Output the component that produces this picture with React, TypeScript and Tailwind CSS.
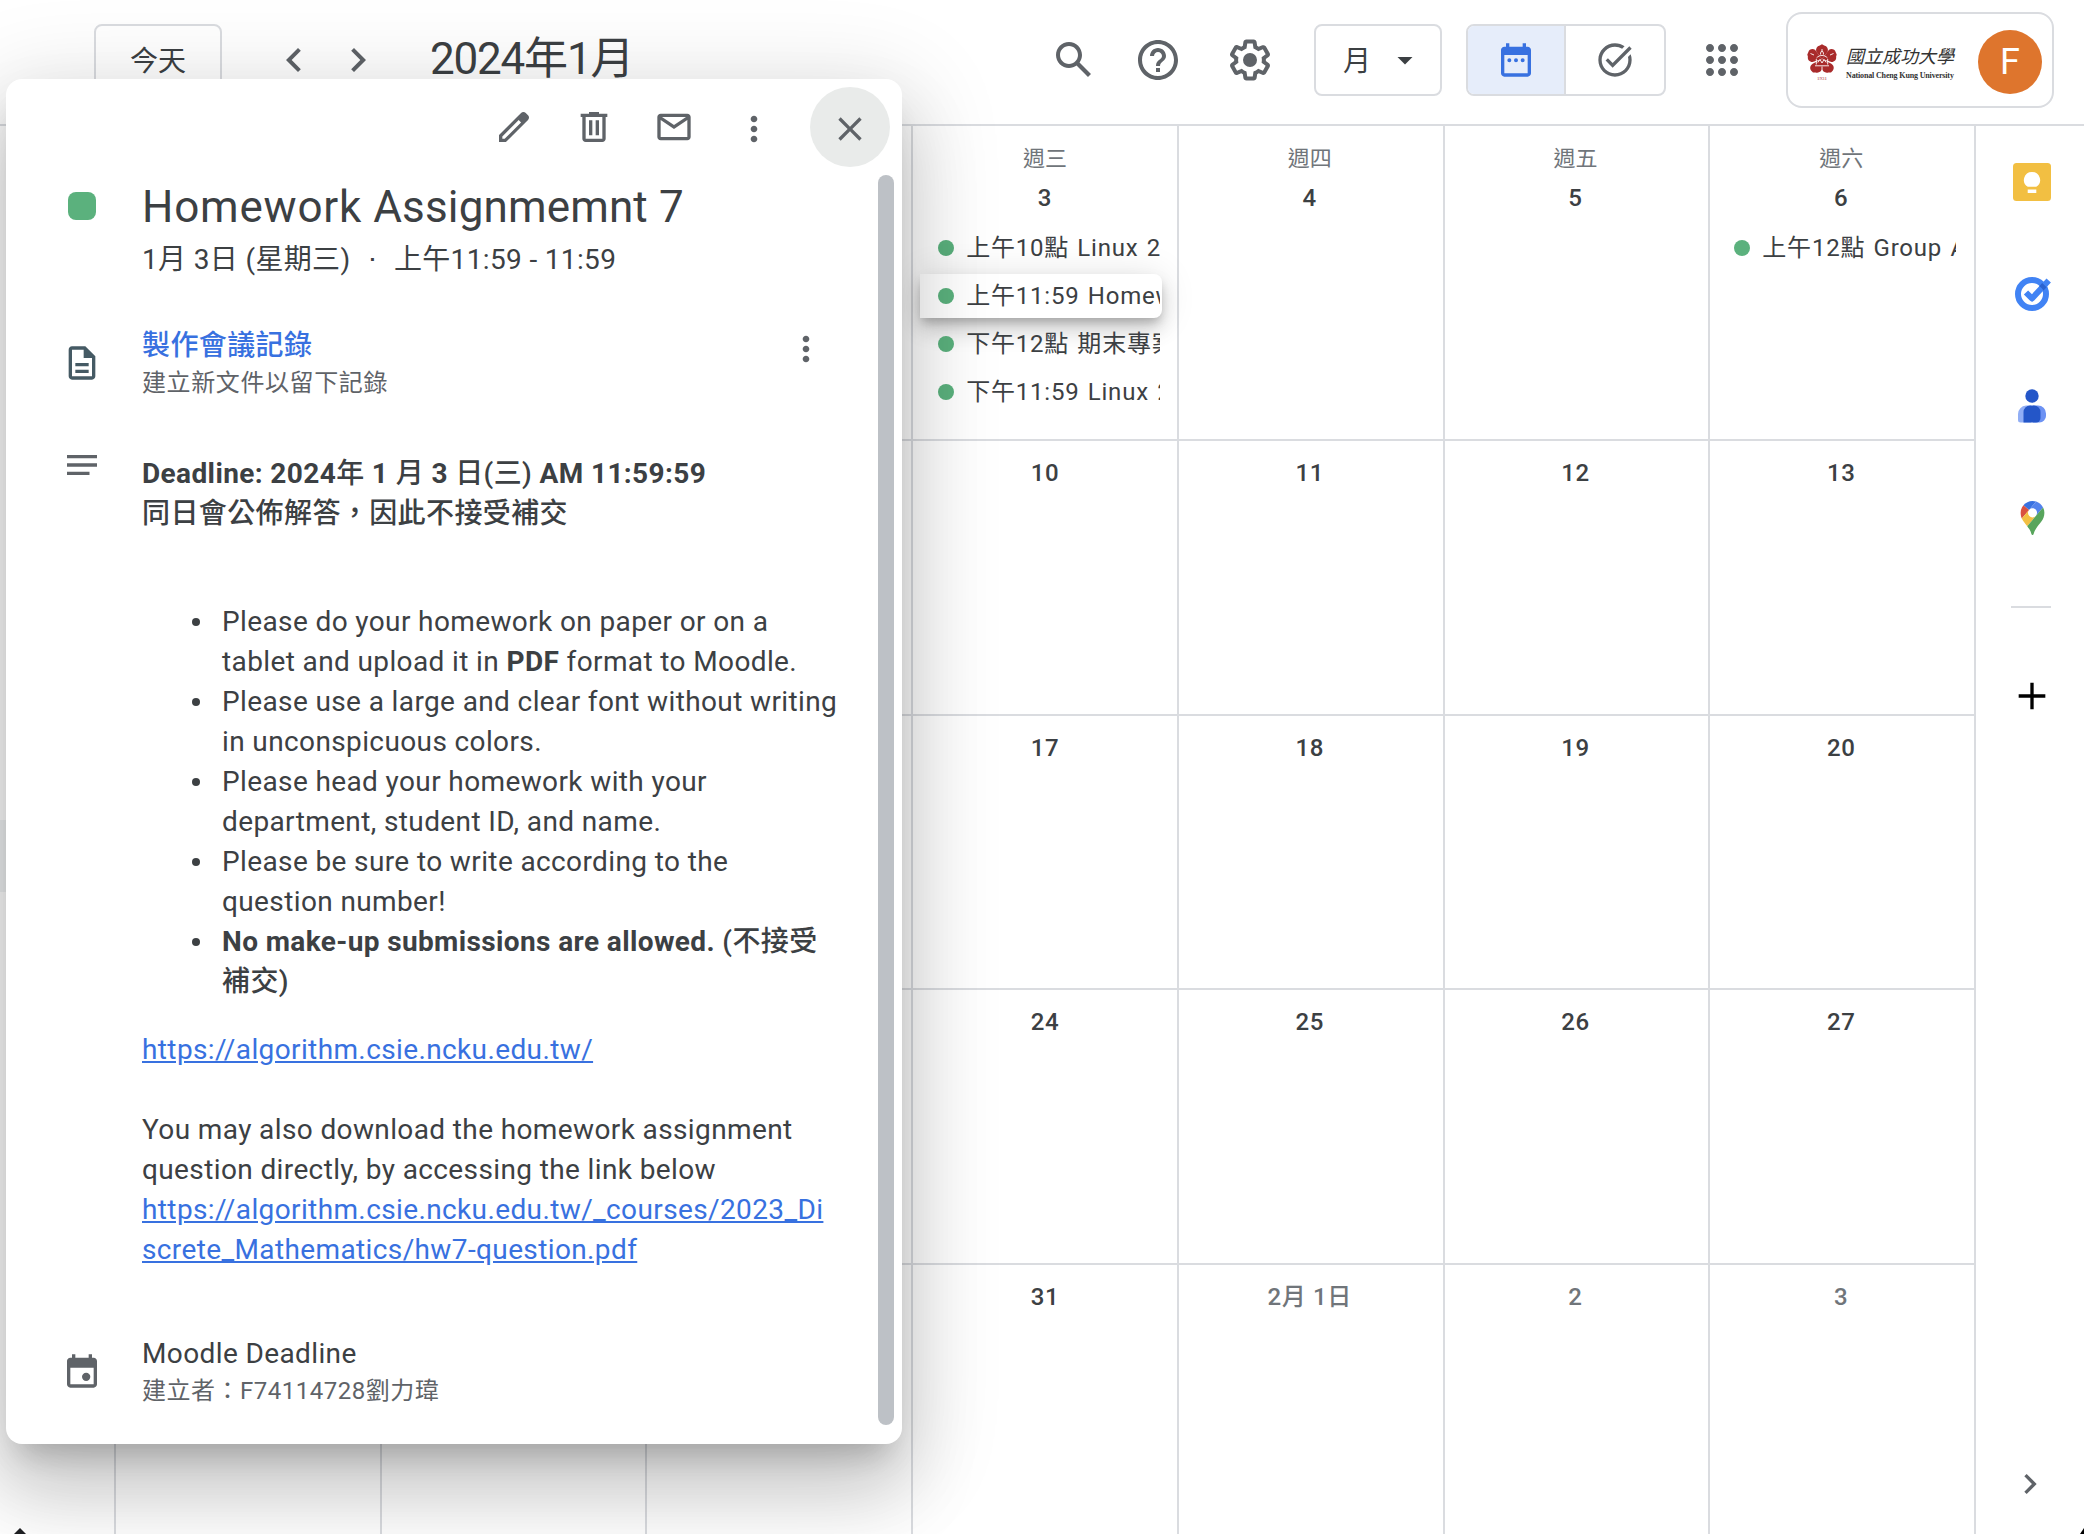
import React from "react";

const P = {
  search:
    "M20.49 19l-5.73-5.73C15.53 12.2 16 10.91 16 9.5 16 5.91 13.09 3 9.5 3S3 5.91 3 9.5 5.91 16 9.5 16c1.41 0 2.7-.47 3.77-1.24L19 20.49 20.49 19zM5 9.5C5 7.01 7.01 5 9.5 5S14 7.01 14 9.5 11.99 14 9.5 14 5 11.99 5 9.5z",
  help: "M11 18h2v-2h-2v2zm1-16C6.48 2 2 6.48 2 12s4.48 10 10 10 10-4.48 10-10S17.52 2 12 2zm0 18c-4.41 0-8-3.59-8-8s3.59-8 8-8 8 3.59 8 8-3.59 8-8 8zm0-14c-2.21 0-4 1.79-4 4h2c0-1.1.9-2 2-2s2 .9 2 2c0 2-3 1.75-3 5h2c0-2.25 3-2.5 3-5 0-2.21-1.79-4-4-4z",
  gear: "M13.85 22.25h-3.7c-.74 0-1.36-.54-1.45-1.27l-.27-1.89c-.27-.14-.53-.29-.79-.46l-1.8.72c-.7.26-1.47-.03-1.81-.65L2.2 15.53c-.35-.66-.2-1.44.36-1.88l1.53-1.19c-.01-.15-.02-.3-.02-.46 0-.15.01-.31.02-.46l-1.52-1.19c-.59-.45-.74-1.26-.37-1.88l1.85-3.19c.34-.62 1.11-.9 1.79-.63l1.81.73c.26-.17.52-.32.78-.46l.27-1.91c.09-.7.71-1.25 1.44-1.25h3.7c.74 0 1.36.54 1.45 1.27l.27 1.89c.27.14.53.29.79.46l1.8-.72c.71-.26 1.48.03 1.82.65l1.84 3.18c.36.66.2 1.44-.36 1.88l-1.52 1.19c.01.15.02.3.02.46s-.01.31-.02.46l1.52 1.19c.56.45.72 1.23.37 1.86l-1.86 3.22c-.34.62-1.11.9-1.8.63l-1.8-.72c-.26.17-.52.32-.78.46l-.27 1.91c-.1.68-.72 1.22-1.46 1.22zm-3.23-2h2.76l.37-2.55.53-.22c.44-.18.88-.44 1.34-.78l.45-.34 2.38.96 1.38-2.4-2.03-1.58.07-.56c.03-.26.06-.51.06-.78s-.03-.53-.06-.78l-.07-.56 2.03-1.58-1.39-2.4-2.39.96-.45-.35c-.42-.32-.87-.58-1.33-.77l-.52-.22-.37-2.55h-2.76l-.37 2.55-.53.21c-.44.19-.88.44-1.34.79l-.45.33-2.38-.95-1.39 2.39 2.03 1.58-.07.56a7 7 0 0 0-.06.79c0 .26.02.53.06.78l.07.56-2.03 1.58 1.38 2.4 2.39-.96.45.35c.43.33.86.58 1.33.77l.53.22.38 2.55zM15.5 12a3.5 3.5 0 1 1-7 0 3.5 3.5 0 0 1 7 0z",
  calendar:
    "M19 4h-1V2h-2v2H8V2H6v2H5c-1.1 0-2 .9-2 2v14c0 1.1.9 2 2 2h14c1.1 0 2-.9 2-2V6c0-1.1-.9-2-2-2zm0 16H5V9h14v11zM6.800 12.100a1.200 1.200 0 1 0 2.400 0a1.200 1.200 0 0 0-2.400 0zM10.800 12.100a1.200 1.200 0 1 0 2.400 0a1.200 1.200 0 0 0-2.400 0zM14.800 12.100a1.200 1.200 0 1 0 2.400 0a1.200 1.200 0 0 0-2.400 0z",
  task: "M22 5.18L10.59 16.6l-4.24-4.24 1.41-1.41 2.83 2.83 10-10L22 5.18zm-2.21 5.04c.13.57.21 1.17.21 1.78 0 4.42-3.58 8-8 8s-8-3.58-8-8 3.58-8 8-8c1.58 0 3.04.46 4.28 1.25l1.44-1.44C16.1 2.67 14.13 2 12 2 6.48 2 2 6.48 2 12s4.48 10 10 10 10-4.48 10-10c0-1.19-.22-2.33-.6-3.39l-1.61 1.61z",
  apps: "M6 8c1.1 0 2-.9 2-2s-.9-2-2-2-2 .9-2 2 .9 2 2 2zm6 12c1.1 0 2-.9 2-2s-.9-2-2-2-2 .9-2 2 .9 2 2 2zm-6 0c1.1 0 2-.9 2-2s-.9-2-2-2-2 .9-2 2 .9 2 2 2zm0-6c1.1 0 2-.9 2-2s-.9-2-2-2-2 .9-2 2 .9 2 2 2zm6 0c1.1 0 2-.9 2-2s-.9-2-2-2-2 .9-2 2 .9 2 2 2zm4-8c0 1.1.9 2 2 2s2-.9 2-2-.9-2-2-2-2 .9-2 2zm-4 2c1.1 0 2-.9 2-2s-.9-2-2-2-2 .9-2 2 .9 2 2 2zm6 6c1.1 0 2-.9 2-2s-.9-2-2-2-2 .9-2 2 .9 2 2 2zm0 6c1.1 0 2-.9 2-2s-.9-2-2-2-2 .9-2 2 .9 2 2 2z",
  left: "M15.41 7.41L14 6l-6 6 6 6 1.41-1.41L10.83 12z",
  right: "M10 6L8.59 7.41 13.17 12l-4.58 4.59L10 18l6-6z",
  down: "M7 10l5 5 5-5z",
  edit: "M20.41 4.94l-1.35-1.35c-.78-.78-2.05-.78-2.83 0L3 16.82V21h4.18L20.41 7.77c.79-.78.79-2.05 0-2.83zm-14 14.12L5 19v-1.36l9.82-9.82 1.41 1.41-9.82 9.83z",
  trash:
    "M15 4V3H9v1H4v2h1v13c0 1.1.9 2 2 2h10c1.1 0 2-.9 2-2V6h1V4h-5zm2 15H7V6h10v13zM9 8h2v9H9V8zm4 0h2v9h-2V8z",
  mail: "M20 4H4c-1.1 0-2 .9-2 2v12c0 1.1.9 2 2 2h16c1.1 0 2-.9 2-2V6c0-1.1-.9-2-2-2zm-.8 2L12 10.8 4.8 6h14.4zM4 18V7.87l8 5.33 8-5.33V18H4z",
  more: "M12 8c1.1 0 2-.9 2-2s-.9-2-2-2-2 .9-2 2 .9 2 2 2zm0 2c-1.1 0-2 .9-2 2s.9 2 2 2 2-.9 2-2-.9-2-2-2zm0 6c-1.1 0-2 .9-2 2s.9 2 2 2 2-.9 2-2-.9-2-2-2z",
  close:
    "M19 6.41L17.59 5 12 10.59 6.41 5 5 6.41 10.59 12 5 17.59 6.41 19 12 13.41 17.59 19 19 17.59 13.41 12z",
  doc: "M8 16h8v2H8zm0-4h8v2H8zm6-10H6c-1.1 0-2 .9-2 2v16c0 1.1.89 2 1.99 2H18c1.1 0 2-.9 2-2V8l-6-6zm4 18H6V4h7v5h5v11z",
  notes: "M3 18h13.5v-2H3v2zM3 6v2h18V6H3zm0 7h18v-2H3v2z",
  event:
    "M19 4h-1V2h-2v2H8V2H6v2H5c-1.1 0-2 .9-2 2v14c0 1.1.9 2 2 2h14c1.1 0 2-.9 2-2V6c0-1.1-.9-2-2-2zm0 16H5V10h14v10zM12 15.500a2.500 2.500 0 1 0 5 0 2.500 2.500 0 0 0-5 0z",
  plus: "M20 13h-7v7h-2v-7H4v-2h7V4h2v7h7z",
};

function Icon({ d, className }: { d: string; className: string }) {
  return (
    <svg viewBox="0 0 24 24" fill="currentColor" fillRule="evenodd" className={`block shrink-0 ${className}`}>
      <path d={d} />
    </svg>
  );
}

function Emblem() {
  return (
    <svg viewBox="0 0 30 36" className="block h-[36px] w-[30px] shrink-0">
      <g fill="#a92b2b">
        <path d="M15 .3l2.200 1.200c3 .6 4.200 3.300 3.600 6L15 15 9.200 7.500c-.6-2.700.6-5.400 3.600-6z" />
        <path d="M.3 10.500l1-2.300C2 5.200 5.500 4.300 8 5.700L15 15 5.500 18C2.500 17.800.3 15.600.9 12.700z" />
        <path d="M29.700 10.500l-1-2.300c-.7-3-4.200-3.900-6.700-2.500L15 15l9.500 3c3-.2 5.200-2.400 4.600-5.300z" />
        <path d="M6 28.500l-1.700-1.700c-2-2.600-1-5.800 1.700-7.300L15 15l.5 9.500c-1 2.800-3.800 4.900-6.900 3.900z" />
        <path d="M24 28.500l1.700-1.700c2-2.600 1-5.800-1.700-7.300L15 15l-.5 9.500c1 2.800 3.800 4.900 6.900 3.900z" />
      </g>
      <g fill="none" stroke="#fff" strokeWidth="0.900">
        <path d="M13.500 10.500c0-4.500 3-4.500 3 0M15 5v3M9.500 14c3-3.500 8-3.500 11 0M9.300 15v5.500M20.700 15v5.500M10.800 18.500l2.200-3 2 3.500 2-3.500 2.200 3M8 21.800h14M15 22.500v6M3.500 9.500l3.500 1.500M26.500 9.500l-3.500 1.500" />
      </g>
      <text x="15" y="35.800" textAnchor="middle" fontSize="5" fill="#a92b2b" fontFamily="Liberation Serif, serif">
        1931
      </text>
    </svg>
  );
}

function TopBar() {
  return (
    <header className="flex h-[126px] shrink-0 border-b-2 border-[#dadce0] pt-3 text-[#5f6368]">
      <div className="mt-3 ml-[94px] flex h-[72px] w-32 items-center justify-center rounded-lg border-2 border-[#dadce0] pt-[3px] text-[28px] text-[#3c4043]">
        今天
      </div>
      <div className="mt-6 ml-12 flex gap-4">
        <Icon d={P.left} className="size-12" />
        <Icon d={P.right} className="size-12" />
      </div>
      <h1 className="mt-[13px] ml-[48px] w-[620px] text-[44px] leading-[68px] tracking-[-1.200px] whitespace-nowrap text-[#3c4043]">
        2024年1月
      </h1>
      <div className="mt-6 flex">
        <Icon d={P.search} className="size-12" />
        <Icon d={P.help} className="ml-9 size-12" />
        <Icon d={P.gear} className="ml-11 size-12" />
      </div>
      <div className="mt-3 ml-10 flex h-[72px] w-32 items-center rounded-lg border-2 border-[#dadce0] pl-[27px] text-[28px] text-[#3c4043]">
        <span className="pt-[3px]">月</span>
        <Icon d={P.down} className="ml-4 size-[36px]" />
      </div>
      <div className="mt-3 ml-6 flex h-[72px] w-[200px] overflow-hidden rounded-lg border-2 border-[#dadce0]">
        <div className="flex w-[98px] items-center justify-center border-r-2 border-[#dadce0] bg-[#e6edfa] text-[#3871e0]">
          <Icon d={P.calendar} className="size-10" />
        </div>
        <div className="flex flex-1 items-center justify-center">
          <Icon d={P.task} className="size-10" />
        </div>
      </div>
      <Icon d={P.apps} className="mt-6 ml-8 size-12" />
      <div className="ml-10 flex h-24 w-[268px] items-start rounded-2xl border-2 border-[#dadce0] pt-4 pl-[19px]">
        <div className="mt-3.5">
          <Emblem />
        </div>
        <div className="mt-[13px] ml-[9px] w-[122px] text-[#333]">
          <div className="text-[18px] leading-7 font-normal italic">國立成功大學</div>
          <div className="-mt-px font-['Liberation_Serif',serif] text-[8px] leading-3 font-bold tracking-[-0.15px] whitespace-nowrap">
            National Cheng Kung University
          </div>
        </div>
        <div className="ml-2.5 flex size-16 shrink-0 items-center justify-center rounded-full bg-[#de752d] text-[36px] text-white">F</div>
      </div>
    </header>
  );
}

type Item = { text: string; active?: boolean };
type Day = { label?: string; muted?: boolean; head?: string; items?: Item[] };

const weeks: { height: string; days: Day[] }[] = [
  {
    height: "h-[315px]",
    days: [
      {},
      {},
      {},
      {
        head: "週三",
        label: "3",
        items: [
          { text: "上午10點 Linux 2" },
          { text: "上午11:59 Homew", active: true },
          { text: "下午12點 期末專案" },
          { text: "下午11:59 Linux 2" },
        ],
      },
      { head: "週四", label: "4" },
      { head: "週五", label: "5" },
      { head: "週六", label: "6", items: [{ text: "上午12點 Group A" }] },
    ],
  },
  { height: "h-[275px]", days: [{}, {}, {}, { label: "10" }, { label: "11" }, { label: "12" }, { label: "13" }] },
  { height: "h-[274px]", days: [{}, {}, {}, { label: "17" }, { label: "18" }, { label: "19" }, { label: "20" }] },
  { height: "h-[275px]", days: [{}, {}, {}, { label: "24" }, { label: "25" }, { label: "26" }, { label: "27" }] },
  {
    height: "h-[275px]",
    days: [
      {},
      {},
      {},
      { label: "31" },
      { label: "2月 1日", muted: true },
      { label: "2", muted: true },
      { label: "3", muted: true },
    ],
  },
];

function EventChip({ item }: { item: Item }) {
  return (
    <div
      className={
        item.active
          ? "flex h-11 w-[242px] items-center rounded-r-lg bg-white pl-[18px] shadow-[0_12px_20px_0_rgba(0,0,0,0.14),0_2px_36px_0_rgba(0,0,0,0.12),0_6px_10px_-2px_rgba(0,0,0,0.2)]"
          : "flex h-11 w-[242px] items-center pl-[18px]"
      }
    >
      <span className="size-4 shrink-0 rounded-full bg-[#5bb17d]" />
      <span className="ml-3 w-[194px] overflow-hidden text-[24px] leading-[40px] tracking-[0.8px] [word-spacing:1.500px] whitespace-nowrap">
        {item.text}
      </span>
    </div>
  );
}

function MonthGrid() {
  return (
    <main className="flex w-[1976px] shrink-0 flex-col pl-[114px] text-[#3c4043]">
      {weeks.map((week, w) => (
        <div key={w} className={`grid shrink-0 grid-cols-7 border-l-2 border-[#dadce0] ${week.height}`}>
          {week.days.map((day, i) => (
            <div key={i} className="min-w-0 border-r-2 border-b-2 border-[#dadce0]">
              <div className={i > 3 ? "-ml-px pr-px" : ""}>
                {day.head && <div className="pt-[17px] text-center text-[22px] leading-8 text-[#70757a]">{day.head}</div>}
                <div
                  className={`text-center text-[24px] leading-8 font-medium tracking-[0.6px] ${day.head ? "mt-[7px]" : "pt-4"} ${day.muted ? "text-[#70757a]" : ""}`}
                >
                  {day.label}
                </div>
                {day.items && (
                  <div className="mt-3 flex flex-col gap-1 pl-[7px]">
                    {day.items.map((item) => (
                      <EventChip key={item.text} item={item} />
                    ))}
                  </div>
                )}
              </div>
            </div>
          ))}
        </div>
      ))}
    </main>
  );
}

function SideRail() {
  return (
    <aside className="flex flex-1 flex-col items-center pt-[37px] pl-1">
      <svg viewBox="0 0 38 38" className="block size-[38px] shrink-0">
        <rect width="38" height="38" rx="3.500" fill="#f2bf42" />
        <path d="M19 9a8 8 0 0 0-4.300 14.800h8.600A8 8 0 0 0 19 9z" fill="#fff" />
        <rect x="14.700" y="26.500" width="8.600" height="3.500" fill="#fff" />
      </svg>
      <svg viewBox="0 0 36 36" className="mt-[75px] ml-0.5 block size-[36px] shrink-0">
        <circle cx="17" cy="18" r="14" fill="none" stroke="#4183f4" strokeWidth="6" />
        <path d="M11 16.500l6 6L33.700 4.500" fill="none" stroke="#4183f4" strokeWidth="6" strokeLinejoin="round" />
        <path d="M24.200 10.300l3-3.200 4.400 4.100-3.100 3.300a14 14 0 0 0-4.300-4.200z" fill="#2b63d0" />
      </svg>
      <svg viewBox="0 0 28 34" className="mt-[77px] block h-[34px] w-[28px] shrink-0">
        <circle cx="14" cy="7" r="6.700" fill="#2456c8" />
        <path d="M8 16.500h5v17H2.500A2.500 2.500 0 0 1 0 31v-6a8.500 8.500 0 0 1 8-8.500z" fill="#91aef5" />
        <path d="M15 16.500h5a8 8 0 0 1 8 8V27a6.500 6.500 0 0 1-6.500 6.500H15z" fill="#6d92f3" />
        <path d="M12 16.500h4a6.500 6.500 0 0 1 6.500 6.500v6a4.500 4.500 0 0 1-4.500 4.500H5.500V23a6.500 6.500 0 0 1 6.500-6.500z" fill="#2456c8" />
      </svg>
      <svg viewBox="0 0 92.3 132.3" className="mt-[78px] block h-[34px] w-[25px] shrink-0">
        <path fill="#3871e0" d="M60.200 2.200C55.800.8 51 0 46.100 0 32 0 19.300 6.400 10.800 16.500l21.800 18.300L60.200 2.200z" />
        <path fill="#d95040" d="M10.800 16.500C4.100 24.500 0 34.900 0 46.100c0 8.700 1.700 15.700 4.600 22l28-33.300-21.800-18.300z" />
        <path
          fill="#5383ec"
          d="M46.200 28.500c9.800 0 17.700 7.900 17.700 17.700 0 4.300-1.600 8.300-4.200 11.400 0 0 13.900-16.600 27.500-32.700-5.600-10.800-15.300-19-27-22.700L32.600 34.800c3.300-3.800 8.100-6.300 13.600-6.300"
        />
        <path
          fill="#f2bf42"
          d="M46.200 63.800c-9.800 0-17.700-7.900-17.700-17.700 0-4.300 1.500-8.300 4.100-11.300l-28 33.300c4.800 10.600 12.800 19.200 21 29.900l34.100-40.500c-3.300 3.900-8.100 6.300-13.500 6.300"
        />
        <path
          fill="#58a55c"
          d="M59.100 109.200c15.400-24.100 33.300-35 33.300-63 0-7.700-1.900-14.900-5.200-21.300L25.600 98c2.600 3.400 5.300 7.300 7.900 11.300 9.400 14.500 6.800 23.100 12.800 23.100s3.400-8.700 12.800-23.200"
        />
      </svg>
      <div className="mt-[71px] mr-0.5 h-0.5 w-10 shrink-0 bg-[#dadce0]" />
      <Icon d={P.plus} className="mt-[68px] size-10 text-black" />
      <Icon d={P.right} className="mt-[748px] mr-1 size-10 text-[#5f6368]" />
    </aside>
  );
}

const bullets: React.ReactNode[] = [
  <>
    Please do your homework on paper or on a<br />
    tablet and upload it in <b>PDF</b> format to Moodle.
  </>,
  <>
    Please use a large and clear font without writing
    <br />
    in unconspicuous colors.
  </>,
  <>
    Please head your homework with your
    <br />
    department, student ID, and name.
  </>,
  <>
    Please be sure to write according to the
    <br />
    question number!
  </>,
  <span className="font-bold">
    No make-up submissions are allowed. <span className="font-medium">(不接受</span>
    <br />
    <span className="font-medium">補交)</span>
  </span>,
];

function EventDialog() {
  return (
    <div
      role="dialog"
      className="absolute top-[79px] left-[6px] flex h-[1365px] w-[896px] rounded-2xl bg-white text-[28px] leading-[40px] tracking-[0.380px] whitespace-nowrap text-[#3c4043] shadow-[0_48px_76px_6px_rgba(0,0,0,0.14),0_18px_92px_16px_rgba(0,0,0,0.12),0_22px_30px_-14px_rgba(0,0,0,0.2)]"
    >
      <div className="flex flex-1 flex-col">
        <div className="flex h-[96px] items-center pt-2 pl-[488px] text-[#5f6368]">
          <Icon d={P.edit} className="-mt-2 size-10" />
          <Icon d={P.trash} className="-mt-2 ml-10 size-10" />
          <Icon d={P.mail} className="-mt-2 ml-10 size-10" />
          <Icon d={P.more} className="-mt-1 ml-10 size-10" />
          <div className="-mt-2 ml-9 flex size-20 shrink-0 items-center justify-center rounded-full bg-[#e9ebea]">
            <Icon d={P.close} className="mt-1 size-10" />
          </div>
        </div>

        <div className="flex">
          <div className="mt-[17px] ml-[62px] size-7 rounded-lg bg-[#5bb17d]" />
          <div className="ml-[46px]">
            <h2 className="mt-[6px] text-[44px] leading-[52px] tracking-[0.150px]">
              <span className="tracking-[0.800px]">Homework</span> Assignmemnt 7
            </h2>
            <p className="mt-[7px] leading-[40px] tracking-[0.350px]">
              1月 3日 (星期三)<span className="mx-[17px]">⋅</span>上午11:59 - 11:59
            </p>
          </div>
        </div>

        <div className="mt-[46px] flex">
          <Icon d={P.doc} className="mt-[17px] ml-14 size-10 text-[#455a64]" />
          <div className="ml-10 w-[644px]">
            <p className="font-medium tracking-[0.4px] text-[#3871e0]">製作會議記錄</p>
            <p className="-mt-px text-[24px] leading-[36px] tracking-[0.6px] text-[#5f6368]">建立新文件以留下記錄</p>
          </div>
          <Icon d={P.more} className="mt-[3px] size-10 text-[#5f6368]" />
        </div>

        <div className="mt-[53px] flex">
          <Icon d={P.notes} className="-mt-[9px] ml-14 size-10 text-[#5f6368]" />
          <div className="ml-10">
            <p className="font-bold">
              Deadline: 2024<span className="font-medium">年</span> 1 <span className="font-medium">月</span> 3{" "}
              <span className="font-medium">日(三)</span> AM 11:59:59
            </p>
            <p className="font-medium tracking-[0.4px]">同日會公佈解答，因此不接受補交</p>
            <ul className="mt-[68px] pl-[52px]">
              {bullets.map((b, i) => (
                <li key={i} className="flex">
                  <span className="mt-4 -ml-[2px] size-2 shrink-0 rounded-full bg-[#3c4043]" />
                  <div className="ml-[22px]">{b}</div>
                </li>
              ))}
            </ul>
            <p className="mt-7 text-[#3871e0] underline">https://algorithm.csie.ncku.edu.tw/</p>
            <p className="mt-10">
              You may also download the homework assignment
              <br />
              question directly, by accessing the link below
              <br />
              <a className="text-[#3871e0] underline">
                https://algorithm.csie.ncku.edu.tw/_courses/2023_Di
                <br />
                screte_Mathematics/hw7-question.pdf
              </a>
            </p>
          </div>
        </div>

        <div className="mt-[64px] flex">
          <Icon d={P.event} className="mt-[17px] ml-14 size-10 text-[#5f6368]" />
          <div className="ml-10">
            <p>Moodle Deadline</p>
            <p className="-mt-px text-[24px] leading-[36px] tracking-[0.5px] text-[#5f6368]">建立者：F74114728劉力瑋</p>
          </div>
        </div>
      </div>
      <div className="mt-24 mr-2 -ml-6 h-[1250px] w-4 shrink-0 rounded-full bg-[#bdc1c6]" />
    </div>
  );
}

export default function App() {
  return (
    <div className="relative flex h-[1534px] w-[2084px] flex-col overflow-hidden bg-white font-[Roboto,'Noto_Sans_CJK_TC',sans-serif]">
      <TopBar />
      <div className="flex min-h-0 flex-1">
        <MonthGrid />
        <SideRail />
      </div>
      <div className="absolute top-[820px] left-0 h-[72px] w-3 bg-[#f1f3f4]" />
      <svg viewBox="0 0 12 6" className="absolute bottom-0 left-[14px] h-1.5 w-3">
        <path d="M0 6L6 0l6 6z" fill="#202124" />
      </svg>
      <svg viewBox="0 0 4 6" className="absolute right-0 bottom-0 h-1.5 w-1">
        <path d="M0 6L4 0v6z" fill="#000" />
      </svg>
      <EventDialog />
    </div>
  );
}
